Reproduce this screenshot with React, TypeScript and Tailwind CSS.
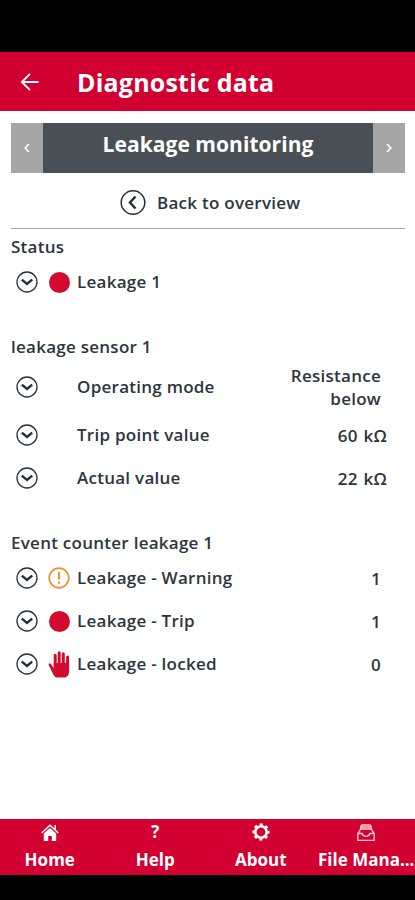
import type { ReactNode } from "react";

const Chevron = () => (
  <svg className="h-[22px] w-[22px] shrink-0" viewBox="0 0 22 22" fill="none" stroke="#25313a">
    <circle cx="11" cy="11" r="10" strokeWidth="1.3" />
    <path d="M5.8 8.6l5.2 4.3 5.2-4.3" strokeWidth="2.5" />
  </svg>
);

const Dot = () => <span className="block h-[21px] w-[21px] rounded-full bg-[#d20a2e]" />;

const Warning = () => (
  <svg className="h-[22px] w-[22px]" viewBox="0 0 22 22" fill="none" stroke="#f0922b">
    <circle cx="11" cy="11" r="9.8" strokeWidth="1.7" />
    <path d="M11 5v7.5M11 14.5v2.3" strokeWidth="2" />
  </svg>
);

const Hand = () => (
  <svg className="h-[27px] w-[22px]" viewBox="0 0 22 27" fill="none" stroke="#d20a2e" strokeLinecap="round">
    <path d="M7.2 15V4.2M11.2 15V1.8M15.3 15V2.8M19.6 16V6" strokeWidth="3" />
    <path
      d="M5.7 12h15.4v8c0 4-2 6.5-5 6.5H9.5c-2.3 0-3.5-1.5-4.4-3.6L.8 14.2c-.6-1.7 1-2.5 2-1.3L5.7 17z"
      fill="#d20a2e"
      stroke="none"
    />
  </svg>
);

const HomeIcon = () => (
  <svg className="h-[17px] w-[18px]" viewBox="0 0 18 17" fill="white">
    <path d="M9 3.9l6.2 5.5V17h-4.4v-5H7.2v5H2.8V9.4z" />
    <path d="M.7 9L9 1.3 17.3 9M14.2 1v5" fill="none" stroke="white" strokeWidth="1.5" />
  </svg>
);

const Gear = () => (
  <svg className="h-[18px] w-[18px]" viewBox="0 0 18 18" fill="none" stroke="white">
    <circle cx="9" cy="9" r="5.7" strokeWidth="2.6" />
    <circle cx="9" cy="9" r="7.5" strokeWidth="2.2" strokeDasharray="3 2.89" strokeDashoffset="1.5" />
  </svg>
);

const Tray = () => (
  <svg className="h-[17px] w-[18px]" viewBox="0 0 18 17" fill="none" stroke="#ffd0d7" strokeWidth="1.3">
    <path d="M4.4 1h9.2M3.9 3h10.2M3.5 5h11" />
    <path d="M4.4 1L3 6.5.8 9.5v6.8h16.4V9.5L15 6.5 13.6 1M.8 9.5h4.4c.5 1.9 1.7 2.8 3.8 2.8s3.3-.9 3.8-2.8h4.4" />
  </svg>
);

type RowProps = { label: string; value?: string; icon?: ReactNode; height?: string; valueClass?: string };

const Row = ({ label, value, icon, height = "h-[43px]", valueClass = "pr-[24px]" }: RowProps) => (
  <div className={`flex items-center pt-[1px] pl-[5px] ${height}`}>
    <Chevron />
    <div className="ml-[10px] flex w-[22px] shrink-0 justify-center">{icon}</div>
    <span className="ml-[7px] grow whitespace-nowrap">{label}</span>
    <span className={`text-right leading-[23px] ${valueClass}`}>{value}</span>
  </div>
);

const SectionTitle = ({ children }: { children: ReactNode }) => (
  <h2 className="flex h-[29px] items-center pt-[2px]">{children}</h2>
);

const tabs = [
  { label: "Home", icon: <HomeIcon /> },
  { label: "Help", icon: <span className="text-[17px] leading-[18px]">?</span> },
  { label: "About", icon: <Gear /> },
  { label: "File Mana...", icon: <Tray /> },
];

export default function App() {
  return (
    <div className="flex h-[900px] w-[415px] flex-col overflow-hidden bg-white font-['Open_Sans',sans-serif] font-bold">
      <div className="h-[52px] shrink-0 bg-black" />
      <header className="flex h-[59px] shrink-0 items-center bg-[#d20030] pl-[20px] text-white">
        <svg className="h-[20px] w-[20px]" viewBox="0 0 20 20" fill="none" stroke="white" strokeWidth="1.9">
          <path d="M18.5 10H2M10 1.8L1.8 10l8.2 8.2" />
        </svg>
        <h1 className="ml-[37px] pt-[2px] text-[25px] tracking-[0.2px]">Diagnostic data</h1>
      </header>

      <main className="flex grow flex-col pr-[10px] pl-[11px] text-[17px] font-semibold tracking-[0.26px] text-[#2c363d]">
        <div className="mt-3 flex h-[50px] shrink-0 text-white">
          <button className="flex w-[32px] items-center justify-center bg-[#a5a5a5]">
            <svg className="h-[10px] w-[6px]" viewBox="0 0 6 10" fill="none" stroke="white" strokeWidth="1.6">
              <path d="M5 1L1.2 5 5 9" />
            </svg>
          </button>
          <div className="flex grow items-center justify-center bg-[#485056] pb-[7px] text-[21px] font-bold tracking-[0.05px]">
            Leakage monitoring
          </div>
          <button className="flex w-[32px] items-center justify-center bg-[#a5a5a5]">
            <svg className="h-[10px] w-[6px]" viewBox="0 0 6 10" fill="none" stroke="white" strokeWidth="1.6">
              <path d="M1 1l3.8 4L1 9" />
            </svg>
          </button>
        </div>

        <div className="flex h-[56px] shrink-0 items-center border-b border-[#a9a9a9] pt-[4px] pl-[109px]">
          <svg className="h-[26px] w-[26px]" viewBox="0 0 26 26" fill="none" stroke="#25313a">
            <circle cx="13" cy="12.5" r="11.8" strokeWidth="1.5" />
            <path d="M15.5 6.5L10 12.5l5.5 6" strokeWidth="2.5" />
          </svg>
          <span className="ml-[11px]">Back to overview</span>
        </div>

        <section className="mt-[2px]">
          <SectionTitle>Status</SectionTitle>
          <Row label="Leakage 1" icon={<Dot />} />
        </section>

        <section className="mt-[28px]">
          <SectionTitle>leakage sensor 1</SectionTitle>
          <Row label="Operating mode" value="Resistance below" height="h-[53px]" valueClass="w-[130px] pr-[24px]" />
          <Row label="Trip point value" value="60 kΩ" valueClass="pr-[18px] [word-spacing:1px]" />
          <Row label="Actual value" value="22 kΩ" valueClass="pr-[18px] [word-spacing:1px]" />
        </section>

        <section className="mt-[28px]">
          <SectionTitle>Event counter leakage 1</SectionTitle>
          <Row label="Leakage - Warning" value="1" icon={<Warning />} />
          <Row label="Leakage - Trip" value="1" icon={<Dot />} />
          <Row label="Leakage - locked" value="0" icon={<Hand />} />
        </section>
      </main>

      <nav className="-ml-[3px] grid h-[56px] w-[422px] shrink-0 grid-cols-4 bg-[#d20030] text-white">
        {tabs.map((tab) => (
          <div key={tab.label} className="flex flex-col items-center pt-[4px]">
            <div className="flex h-[18px] items-center">{tab.icon}</div>
            <span className="mt-[7px] text-[17px] leading-[24px] whitespace-nowrap">{tab.label}</span>
          </div>
        ))}
      </nav>
      <div className="h-[25px] shrink-0 bg-black" />
    </div>
  );
}
